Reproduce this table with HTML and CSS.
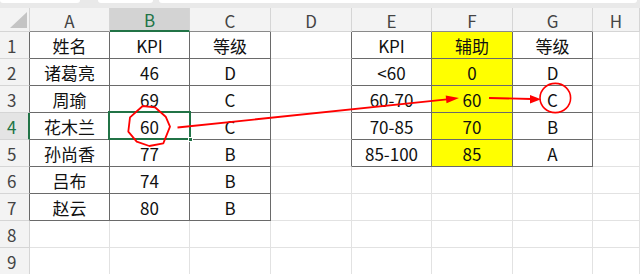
FILE: index.html
```html
<!DOCTYPE html>
<html lang="zh-CN">
<head>
    <meta charset="UTF-8">
    <title>KPI 等级</title>
    <link rel="stylesheet" href="styles.css">
</head>
<body>
    <div class="sheet">
        <div class="topbar">
            <span class="box name-box"></span>
            <span class="box fx-box"></span>
            <span class="box formula"></span>
        </div>

        <div class="grid">
            <!-- column headers -->
            <div class="corner"><span class="corner-tri"></span></div>
            <div class="ch eb">A</div>
            <div class="ch eb on">B</div>
            <div class="ch eb">C</div>
            <div class="ch">D</div>
            <div class="ch eb">E</div>
            <div class="ch eb">F</div>
            <div class="ch eb">G</div>
            <div class="ch">H</div>

            <!-- row 1 -->
            <div class="rh er">1</div>
            <div class="cell t">姓名</div>
            <div class="cell t">KPI</div>
            <div class="cell t">等级</div>
            <div class="cell er"></div>
            <div class="cell t">KPI</div>
            <div class="cell t hl">辅助</div>
            <div class="cell t">等级</div>
            <div class="cell"></div>

            <!-- row 2 -->
            <div class="rh er">2</div>
            <div class="cell t">诸葛亮</div>
            <div class="cell t">46</div>
            <div class="cell t">D</div>
            <div class="cell er"></div>
            <div class="cell t">&lt;60</div>
            <div class="cell t hl">0</div>
            <div class="cell t">D</div>
            <div class="cell"></div>

            <!-- row 3 -->
            <div class="rh er">3</div>
            <div class="cell t">周瑜</div>
            <div class="cell t">69</div>
            <div class="cell t">C</div>
            <div class="cell er"></div>
            <div class="cell t">60-70</div>
            <div class="cell t hl">60</div>
            <div class="cell t">C</div>
            <div class="cell"></div>

            <!-- row 4 -->
            <div class="rh er on">4</div>
            <div class="cell t">花木兰</div>
            <div class="cell t">60</div>
            <div class="cell t">C</div>
            <div class="cell er"></div>
            <div class="cell t">70-85</div>
            <div class="cell t hl">70</div>
            <div class="cell t">B</div>
            <div class="cell"></div>

            <!-- row 5 -->
            <div class="rh er">5</div>
            <div class="cell t">孙尚香</div>
            <div class="cell t">77</div>
            <div class="cell t">B</div>
            <div class="cell er"></div>
            <div class="cell t">85-100</div>
            <div class="cell t hl">85</div>
            <div class="cell t">A</div>
            <div class="cell"></div>

            <!-- row 6 -->
            <div class="rh er">6</div>
            <div class="cell t">吕布</div>
            <div class="cell t">74</div>
            <div class="cell t">B</div>
            <div class="cell"></div>
            <div class="cell"></div>
            <div class="cell"></div>
            <div class="cell"></div>
            <div class="cell"></div>

            <!-- row 7 -->
            <div class="rh er">7</div>
            <div class="cell t">赵云</div>
            <div class="cell t">80</div>
            <div class="cell t">B</div>
            <div class="cell"></div>
            <div class="cell"></div>
            <div class="cell"></div>
            <div class="cell"></div>
            <div class="cell"></div>

            <!-- row 8 -->
            <div class="rh">8</div>
            <div class="cell"></div>
            <div class="cell"></div>
            <div class="cell"></div>
            <div class="cell"></div>
            <div class="cell"></div>
            <div class="cell"></div>
            <div class="cell"></div>
            <div class="cell"></div>

            <!-- row 9 -->
            <div class="rh">9</div>
            <div class="cell"></div>
            <div class="cell"></div>
            <div class="cell"></div>
            <div class="cell"></div>
            <div class="cell"></div>
            <div class="cell"></div>
            <div class="cell"></div>
            <div class="cell"></div>
        </div>

        <!-- active cell B4 -->
        <div class="selection"><span class="fill-handle"></span></div>

        <!-- red pen marks -->
        <svg class="marks" width="640" height="274" viewBox="0 0 640 274">
            <polygon points="142.7,106 155,107.3 165.7,116.7 170,126.7 163.3,143.3 149.3,146 136.7,141.7 128.3,131.7 130,117.3"
                     fill="none" stroke="#f00" stroke-width="1.8" stroke-linejoin="round"/>
            <line x1="177.5" y1="127.5" x2="447" y2="99.3" stroke="#f00" stroke-width="1.8"/>
            <polygon points="459,98 446.5,103.3 445.7,95.4" fill="#f00"/>
            <line x1="489" y1="98" x2="531" y2="99" stroke="#f00" stroke-width="1.8"/>
            <polygon points="541,99.3 530,103.5 530,95" fill="#f00"/>
            <ellipse cx="555.3" cy="98" rx="15.3" ry="14.6" fill="none" stroke="#f00" stroke-width="1.6"/>
        </svg>
    </div>
</body>
</html>
```

FILE: styles.css
```css
* {
    margin: 0;
    padding: 0;
    box-sizing: border-box;
}

body {
    width: 640px;
    height: 274px;
    overflow: hidden;
    background-color: #fff;
    font-family: "Noto Sans CJK SC", "Noto Sans", sans-serif;
    color: #111;
}

.sheet {
    position: relative;
    width: 640px;
    height: 274px;
    overflow: hidden;
}

/* bottom edge of the formula bar */
.topbar {
    display: flex;
    height: 8px;
    background-color: #e9e9e9;
}

.box {
    height: 3px;
    background-color: #fff;
    border-radius: 0 0 3px 3px;
}

.name-box {
    width: 80px;
}

.fx-box {
    width: 55px;
    margin-left: 18px;
}

.formula {
    flex: 1;
    margin-left: 6px;
    margin-right: 3px;
}

.grid {
    display: grid;
    grid-template-columns: 30px 80px 80px 81px 81px 80px 81px 80px 1fr;
    grid-template-rows: 24px repeat(9, 27px);
    font-size: 17px;
}

.corner,
.ch,
.rh {
    background-color: #f3f3f3;
    color: #444;
    border-right: 1px solid #d5d5d5;
    border-bottom: 1px solid #d5d5d5;
    display: flex;
    align-items: center;
    justify-content: center;
}

.corner {
    align-items: flex-end;
    justify-content: flex-end;
    padding: 0 2px 3px 0;
}

.corner-tri {
    width: 17px;
    height: 16px;
    background-color: #c4c4c4;
    clip-path: polygon(100% 0, 100% 100%, 0 100%);
}

.ch {
    line-height: 1;
    padding-top: 1px;
}

.ch.on {
    background-color: #d3d3d3;
    color: #217346;
    border-bottom: 2px solid #217346;
}

.rh {
    justify-content: flex-start;
    padding-left: 7px;
}

.rh.on {
    background-color: #e4e4e4;
    color: #217346;
    border-right: 2px solid #217346;
}

.cell {
    border-right: 1px solid #e2e2e2;
    border-bottom: 1px solid #e2e2e2;
    display: flex;
    align-items: center;
    justify-content: center;
    white-space: nowrap;
}

/* thin borders of the two tables */
.t {
    border-right-color: #6a6a6a;
    border-bottom-color: #6a6a6a;
}

.er {
    border-right-color: #6a6a6a;
}

.ch.eb {
    border-bottom-color: #8a8a8a;
}

.ch.on.eb {
    border-bottom-color: #217346;
}

.hl {
    background-color: #ffff00;
}

.selection {
    position: absolute;
    left: 108px;
    top: 111px;
    width: 83px;
    height: 29px;
    border: 2px solid #217346;
}

.fill-handle {
    position: absolute;
    right: -4px;
    bottom: -4px;
    width: 5px;
    height: 5px;
    background-color: #217346;
    border: 1px solid #fff;
}

.marks {
    position: absolute;
    left: 0;
    top: 0;
    pointer-events: none;
}
```
